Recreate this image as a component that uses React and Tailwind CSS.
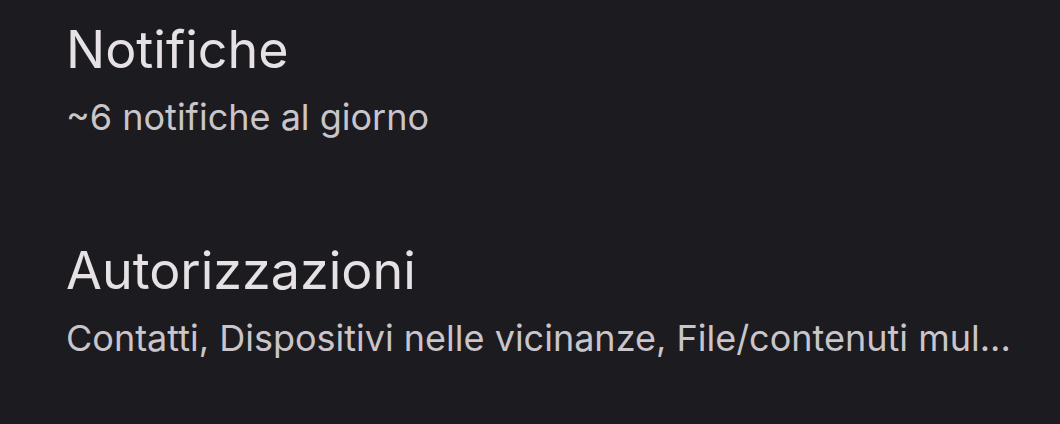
import React from 'react';

const items = [
  { title: 'Notifiche', subtitle: '~6 notifiche al giorno' },
  { title: 'Autorizzazioni', subtitle: 'Contatti, Dispositivi nelle vicinanze, File/contenuti mul...' },
];

const SettingRow = ({ title, subtitle }) => (
  <div className="flex flex-col">
    <div className="text-[52px] leading-[60px] text-[#e6e1e5]">{title}</div>
    <div className="mt-[15px] text-[36px] leading-[44px] text-[#c9c5ca] whitespace-nowrap">{subtitle}</div>
  </div>
);

export default function App() {
  return (
    <div
      className="w-[1060px] h-[424px] bg-[#1c1b1f] pl-[66px] pt-[20px] flex flex-col gap-[102px] overflow-hidden"
      style={{ fontFamily: 'Inter, "Open Sans", sans-serif' }}
    >
      {items.map((item) => (
        <SettingRow key={item.title} {...item} />
      ))}
    </div>
  );
}
